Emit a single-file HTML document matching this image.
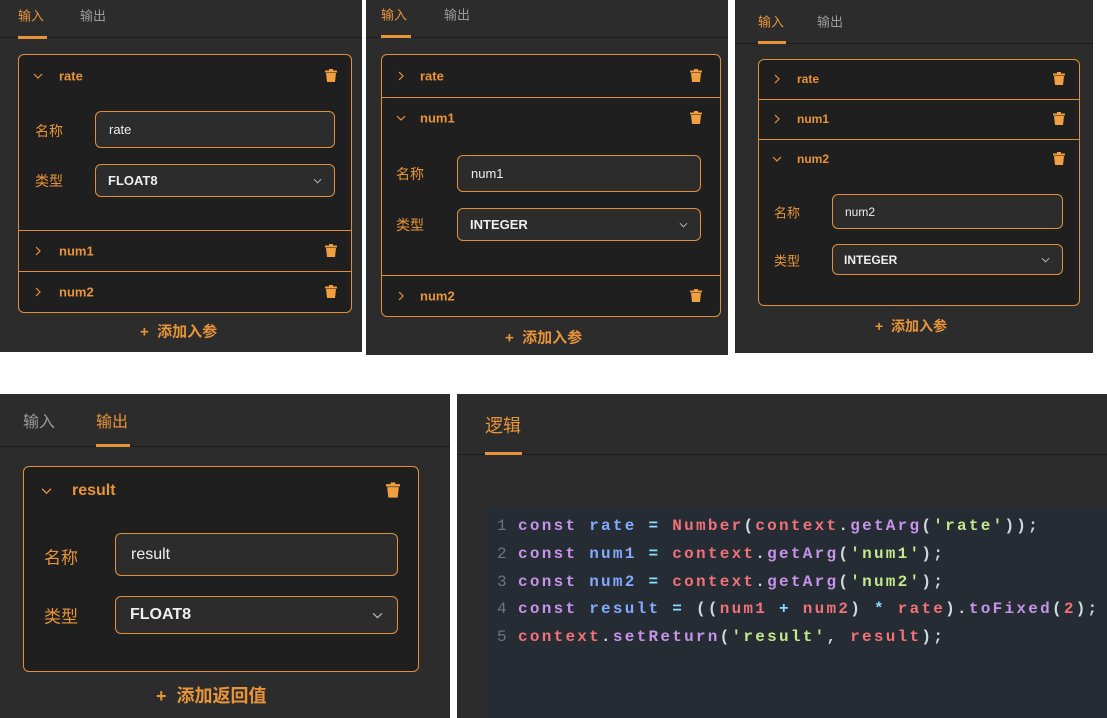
<!DOCTYPE html>
<html><head><meta charset="utf-8"><style>
*{margin:0;padding:0;box-sizing:border-box}
body{width:1107px;height:718px;background:#fff;position:relative;overflow:hidden;font-family:"Liberation Sans","Noto Sans CJK SC",sans-serif}
.a{position:absolute}
.p{position:absolute;background:#2c2c2c}
.hl{position:absolute;left:0;right:0;height:1px;background:#1c1c1c}
.tab{position:absolute;color:#9a9a9a;white-space:nowrap;transform:translateY(-50%)}
.tab.on{color:#e8943a}
.ul{position:absolute;height:3px;background:#e8943a}
.card{position:absolute;border:1px solid #e0903c;border-radius:6px;background:#1f1f1f}
.div{position:absolute;left:0;right:0;height:1px;background:#e0903c}
.o{color:#e8943a;font-weight:bold;position:absolute;white-space:nowrap;transform:translateY(-50%)}
.chev{position:absolute;transform:translateY(-50%)}
.in{position:absolute;border:1px solid #e0903c;border-radius:6px;background:#2c2c2c;color:#eee;display:flex;align-items:center}
.code{position:absolute;font-family:"Liberation Mono",monospace;font-weight:bold;font-size:16px;letter-spacing:2.26px;white-space:pre;color:#cfd8dc;transform:translateY(-50%)}
.k{color:#c792ea}.v{color:#82aaff}.r{color:#f07178}.s{color:#c3e88d}.e{color:#89ddff}.f{color:#c792ea}.n{color:#6b7780;font-weight:normal}
</style></head><body>
<svg width="0" height="0" style="position:absolute"><defs>
<symbol id="tr" viewBox="0 0 12 13"><rect x="4" y="0" width="4" height="2" fill="#f0a040"/><rect x="0" y="1.5" width="12" height="2" rx="0.5" fill="#f0a040"/><path d="M1 4h10l-1 9H2z" fill="#f0a040"/></symbol>
<symbol id="cd" viewBox="0 0 10 6"><path d="M1 1l4 4 4-4" fill="none" stroke="#e8943a" stroke-width="1.2"/></symbol>
<symbol id="cr" viewBox="0 0 6 10"><path d="M1 1l4 4-4 4" fill="none" stroke="#e8943a" stroke-width="1.2"/></symbol>
<symbol id="cg" viewBox="0 0 10 6"><path d="M1 1l4 4 4-4" fill="none" stroke="#bbb" stroke-width="1.1"/></symbol>
</defs></svg>

<!-- Panel 1 -->
<div class="p" style="left:0;top:0;width:362px;height:352px">
 <div class="tab on" style="left:18px;top:15px;font-size:13px">输入</div>
 <div class="tab" style="left:80px;top:15px;font-size:13px">输出</div>
 <div class="hl" style="top:37px"></div>
 <div class="ul" style="left:18px;top:36px;width:29px"></div>
 <div class="card" style="left:18px;top:54px;width:334px;height:259px">
  <svg class="chev" style="left:14px;top:21px" width="10" height="6"><use href="#cd"/></svg>
  <div class="o" style="left:40px;top:21px;font-size:13px">rate</div>
  <svg class="a" style="left:306px;top:14px" width="12" height="13"><use href="#tr"/></svg>
  <div class="o" style="left:16px;top:76px;font-size:14px;font-weight:normal">名称</div>
  <div class="in" style="left:76px;top:56px;width:240px;height:37px;padding-left:13px;font-size:13px">rate</div>
  <div class="o" style="left:16px;top:126px;font-size:14px;font-weight:normal">类型</div>
  <div class="in" style="left:76px;top:109px;width:240px;height:33px;padding-left:12px;font-size:13px;font-weight:bold">FLOAT8<svg class="a" style="right:12px;top:13px" width="9" height="6"><use href="#cg"/></svg></div>
  <div class="div" style="top:175px"></div>
  <svg class="chev" style="left:16px;top:196px" width="6" height="10"><use href="#cr"/></svg>
  <div class="o" style="left:40px;top:196px;font-size:13px">num1</div>
  <svg class="a" style="left:306px;top:189px" width="12" height="13"><use href="#tr"/></svg>
  <div class="div" style="top:216px"></div>
  <svg class="chev" style="left:16px;top:237px" width="6" height="10"><use href="#cr"/></svg>
  <div class="o" style="left:40px;top:237px;font-size:13px">num2</div>
  <svg class="a" style="left:306px;top:230px" width="12" height="13"><use href="#tr"/></svg>
 </div>
 <div class="o" style="left:140px;top:331px;font-size:15px">+&nbsp;&nbsp;添加入参</div>
</div>

<!-- Panel 2 -->
<div class="p" style="left:366px;top:0;width:362px;height:355px">
 <div class="tab on" style="left:15px;top:14px;font-size:13px">输入</div>
 <div class="tab" style="left:78px;top:14px;font-size:13px">输出</div>
 <div class="hl" style="top:37px"></div>
 <div class="ul" style="left:15px;top:35px;width:30px"></div>
 <div class="card" style="left:15px;top:54px;width:340px;height:263px">
  <svg class="chev" style="left:16px;top:21px" width="6" height="10"><use href="#cr"/></svg>
  <div class="o" style="left:38px;top:21px;font-size:13px">rate</div>
  <svg class="a" style="left:308px;top:14px" width="12" height="13"><use href="#tr"/></svg>
  <div class="div" style="top:42px"></div>
  <svg class="chev" style="left:14px;top:63px" width="10" height="6"><use href="#cd"/></svg>
  <div class="o" style="left:38px;top:63px;font-size:13px">num1</div>
  <svg class="a" style="left:308px;top:56px" width="12" height="13"><use href="#tr"/></svg>
  <div class="o" style="left:14px;top:119px;font-size:14px;font-weight:normal">名称</div>
  <div class="in" style="left:75px;top:100px;width:244px;height:37px;padding-left:13px;font-size:13px">num1</div>
  <div class="o" style="left:14px;top:170px;font-size:14px;font-weight:normal">类型</div>
  <div class="in" style="left:75px;top:153px;width:244px;height:33px;padding-left:12px;font-size:13px;font-weight:bold">INTEGER<svg class="a" style="right:12px;top:13px" width="9" height="6"><use href="#cg"/></svg></div>
  <div class="div" style="top:220px"></div>
  <svg class="chev" style="left:16px;top:241px" width="6" height="10"><use href="#cr"/></svg>
  <div class="o" style="left:38px;top:241px;font-size:13px">num2</div>
  <svg class="a" style="left:308px;top:234px" width="12" height="13"><use href="#tr"/></svg>
 </div>
 <div class="o" style="left:139px;top:337px;font-size:15px">+&nbsp;&nbsp;添加入参</div>
</div>

<!-- Panel 3 -->
<div class="p" style="left:735px;top:0;width:358px;height:353px">
 <div class="tab on" style="left:23px;top:21px;font-size:13px">输入</div>
 <div class="tab" style="left:82px;top:21px;font-size:13px">输出</div>
 <div class="hl" style="top:43px"></div>
 <div class="ul" style="left:23px;top:41px;width:28px"></div>
 <div class="card" style="left:23px;top:59px;width:322px;height:247px">
  <svg class="chev" style="left:15px;top:19px" width="6" height="10"><use href="#cr"/></svg>
  <div class="o" style="left:38px;top:19px;font-size:12px">rate</div>
  <svg class="a" style="left:294px;top:12px" width="12" height="13"><use href="#tr"/></svg>
  <div class="div" style="top:39px"></div>
  <svg class="chev" style="left:15px;top:59px" width="6" height="10"><use href="#cr"/></svg>
  <div class="o" style="left:38px;top:59px;font-size:12px">num1</div>
  <svg class="a" style="left:294px;top:52px" width="12" height="13"><use href="#tr"/></svg>
  <div class="div" style="top:79px"></div>
  <svg class="chev" style="left:13px;top:99px" width="10" height="6"><use href="#cd"/></svg>
  <div class="o" style="left:38px;top:99px;font-size:12px">num2</div>
  <svg class="a" style="left:294px;top:92px" width="12" height="13"><use href="#tr"/></svg>
  <div class="o" style="left:15px;top:152px;font-size:13px;font-weight:normal">名称</div>
  <div class="in" style="left:73px;top:134px;width:231px;height:35px;padding-left:12px;font-size:12px">num2</div>
  <div class="o" style="left:15px;top:200px;font-size:13px;font-weight:normal">类型</div>
  <div class="in" style="left:73px;top:184px;width:231px;height:31px;padding-left:11px;font-size:12px;font-weight:bold">INTEGER<svg class="a" style="right:12px;top:12px" width="9" height="6"><use href="#cg"/></svg></div>
 </div>
 <div class="o" style="left:140px;top:326px;font-size:14px">+&nbsp;&nbsp;添加入参</div>
</div>

<!-- Panel 4 -->
<div class="p" style="left:0;top:394px;width:450px;height:324px">
 <div class="tab" style="left:23px;top:26px;font-size:16px">输入</div>
 <div class="tab on" style="left:96px;top:26px;font-size:16px">输出</div>
 <div class="hl" style="top:52px"></div>
 <div class="ul" style="left:96px;top:50px;width:34px"></div>
 <div class="card" style="left:23px;top:72px;width:396px;height:206px">
  <svg class="chev" style="left:17px;top:24px" width="11" height="7"><use href="#cd"/></svg>
  <div class="o" style="left:48px;top:24px;font-size:16px">result</div>
  <svg class="a" style="left:362px;top:15px" width="14" height="16"><use href="#tr"/></svg>
  <div class="o" style="left:20px;top:89px;font-size:17px;font-weight:normal">名称</div>
  <div class="in" style="left:91px;top:66px;width:283px;height:43px;padding-left:15px;font-size:16px">result</div>
  <div class="o" style="left:20px;top:148px;font-size:17px;font-weight:normal">类型</div>
  <div class="in" style="left:91px;top:129px;width:283px;height:38px;padding-left:14px;font-size:16px;font-weight:bold">FLOAT8<svg class="a" style="right:14px;top:15px" width="11" height="7"><use href="#cg"/></svg></div>
 </div>
 <div class="o" style="left:156px;top:301px;font-size:18px">+&nbsp;&nbsp;添加返回值</div>
</div>

<!-- Panel 5 -->
<div class="p" style="left:457px;top:394px;width:650px;height:324px">
 <div class="tab on" style="left:28px;top:31px;font-size:18px">逻辑</div>
 <div class="hl" style="top:60px"></div>
 <div class="ul" style="left:28px;top:58px;width:37px"></div>
 <div class="a" style="left:29px;top:114px;width:621px;height:210px;background:#252c33"></div>
 <div class="code" style="left:40px;top:132px"><span class="n">1</span></div>
 <div class="code" style="left:61px;top:132px"><span class="k">const</span> <span class="v">rate</span> <span class="e">=</span> <span class="r">Number</span>(<span class="r">context</span>.<span class="f">getArg</span>(<span class="s">'rate'</span>));</div>
 <div class="code" style="left:40px;top:160px"><span class="n">2</span></div>
 <div class="code" style="left:61px;top:160px"><span class="k">const</span> <span class="v">num1</span> <span class="e">=</span> <span class="r">context</span>.<span class="f">getArg</span>(<span class="s">'num1'</span>);</div>
 <div class="code" style="left:40px;top:188px"><span class="n">3</span></div>
 <div class="code" style="left:61px;top:188px"><span class="k">const</span> <span class="v">num2</span> <span class="e">=</span> <span class="r">context</span>.<span class="f">getArg</span>(<span class="s">'num2'</span>);</div>
 <div class="code" style="left:40px;top:215px"><span class="n">4</span></div>
 <div class="code" style="left:61px;top:215px"><span class="k">const</span> <span class="v">result</span> <span class="e">=</span> ((<span class="r">num1</span> <span class="e">+</span> <span class="r">num2</span>) <span class="e">*</span> <span class="r">rate</span>).<span class="f">toFixed</span>(<span class="r">2</span>);</div>
 <div class="code" style="left:40px;top:243px"><span class="n">5</span></div>
 <div class="code" style="left:61px;top:243px"><span class="r">context</span>.<span class="f">setReturn</span>(<span class="s">'result'</span>, <span class="r">result</span>);</div>
</div>
</body></html>
